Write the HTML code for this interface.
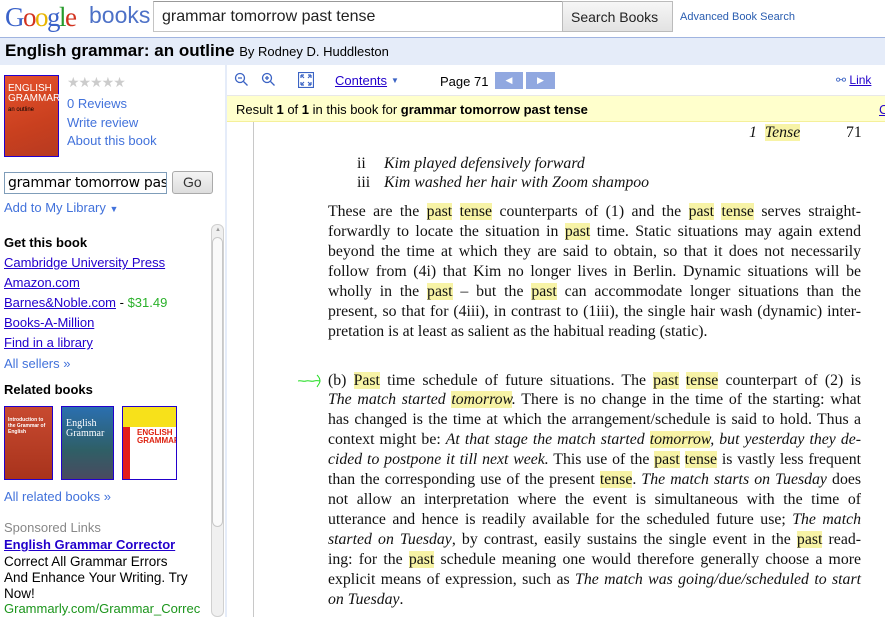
<!DOCTYPE html>
<html><head><meta charset="utf-8"><style>
*{margin:0;padding:0;box-sizing:border-box}
body{width:885px;height:617px;overflow:hidden;background:#fff;font-family:"Liberation Sans",Arial,sans-serif;font-size:13px;color:#000;position:relative}
.a{position:absolute;white-space:nowrap}
a,.lk{color:#2200cc;text-decoration:underline}
.bl{color:#4272db}
.ser{font-family:"Liberation Serif","Times New Roman",serif;font-size:15.8px;color:#111}
.ln{position:absolute;left:328px;width:533px;text-align:justify;text-align-last:justify;white-space:nowrap;line-height:19px}
.h{background:#f7f3a6}
i{font-style:italic}
</style></head><body>
<div class="a" style="left:5px;top:2px;font-size:27px;letter-spacing:-1.5px;font-family:'Liberation Serif',serif;">
<span style="color:#3a62c9">G</span><span style="color:#d2321f">o</span><span style="color:#e8b500">o</span><span style="color:#3a62c9">g</span><span style="color:#279a2c">l</span><span style="color:#d2321f">e</span></div>
<div class="a" style="left:89px;top:2px;font-size:23px;color:#4d71c7">books</div>
<div class="a" style="left:153px;top:1px;width:410px;height:31px;border:1px solid #c4c4c4;border-top-color:#999;font-size:16px;padding:6px 0 0 8px;color:#222">grammar tomorrow past tense</div>
<div class="a" style="left:562px;top:1px;width:111px;height:31px;border:1px solid #bbb;background:linear-gradient(#f6f6f6,#e2e2e2);font-size:14px;padding:7px 0 0 8px;color:#222">Search Books</div>
<div class="a" style="left:680px;top:11px;font-size:11px;color:#2a5db0">Advanced Book Search</div>
<div class="a" style="left:0;top:37px;width:885px;height:28px;background:#e5ecf9;border-top:1px solid #a0b4e0"></div>
<div class="a" style="left:5px;top:41px;font-size:17px;font-weight:bold">English grammar: an outline <span style="font-size:13px;font-weight:normal">By Rodney D. Huddleston</span></div>
<div class="a" style="left:4px;top:75px;width:55px;height:82px;border:1px solid #2200cc;background:linear-gradient(160deg,#e5512c,#c9401f 60%,#b73a20);color:#fff;font-size:10px;line-height:10px;padding:8px 0 0 3px;white-space:normal">ENGLISH<br>GRAMMAR<br><span style="font-size:6px;color:#000">an outline</span></div>
<div class="a" style="left:67px;top:74px;color:#ccc;font-size:14px;letter-spacing:-1px">★★★★★</div>
<div class="a bl" style="left:67px;top:96px">0 Reviews</div>
<div class="a bl" style="left:67px;top:115px">Write review</div>
<div class="a bl" style="left:67px;top:133px">About this book</div>
<div class="a" style="left:4px;top:172px;width:163px;height:22px;border:1px solid #7f9db9;font-size:14px;padding:2px 0 0 3px;overflow:hidden;font-family:'DejaVu Sans',sans-serif;letter-spacing:-0.3px">grammar tomorrow pas</div>
<div class="a" style="left:172px;top:171px;width:41px;height:23px;border:1px solid #aaa;border-radius:3px;background:linear-gradient(#f4f4f4,#ddd);font-size:14px;padding:2px 0 0 10px;color:#333">Go</div>
<div class="a bl" style="left:4px;top:200px">Add to My Library <span style="font-size:9px">▼</span></div>
<div class="a" style="left:4px;top:235px;font-weight:bold">Get this book</div>
<div class="a lk" style="left:4px;top:255px">Cambridge University Press</div>
<div class="a lk" style="left:4px;top:275px">Amazon.com</div>
<div class="a" style="left:4px;top:295px"><span class="lk">Barnes&amp;Noble.com</span> - <span style="color:#2ab12a">$31.49</span></div>
<div class="a lk" style="left:4px;top:315px">Books-A-Million</div>
<div class="a lk" style="left:4px;top:335px">Find in a library</div>
<div class="a bl" style="left:4px;top:356px">All sellers »</div>
<div class="a" style="left:4px;top:382px;font-weight:bold">Related books</div>
<div class="a" style="left:4px;top:406px;width:49px;height:74px;border:1px solid #2200cc;background:linear-gradient(#c84a30,#a8331c);color:#fff;font-size:5px;padding:10px 3px;white-space:normal;font-weight:bold">Introduction to the Grammar of English</div>
<div class="a" style="left:61px;top:406px;width:53px;height:74px;border:1px solid #2200cc;background:linear-gradient(#2a6fb0,#2f5f66 60%,#4a4a60);color:#fff;font-size:10px;padding:12px 4px;white-space:normal;line-height:10px;font-family:'Liberation Serif',serif">English Grammar</div>
<div class="a" style="left:122px;top:406px;width:55px;height:74px;border:1px solid #2200cc;overflow:hidden;background:linear-gradient(90deg,#e31c1c 0 7px,#fff 7px);"><div style="height:20px;background:#f7e11a"></div><div style="color:#d21;font-size:8px;font-weight:bold;padding:2px 0 0 14px;line-height:8px;white-space:normal">ENGLISH GRAMMAR</div></div>
<div class="a bl" style="left:4px;top:489px">All related books »</div>
<div class="a" style="left:4px;top:520px;color:#888">Sponsored Links</div>
<div class="a lk" style="left:4px;top:537px;font-weight:bold">English Grammar Corrector</div>
<div class="a" style="left:4px;top:554px;line-height:16px;font-size:13.5px">Correct All Grammar Errors<br>And Enhance Your Writing. Try<br>Now!</div>
<div class="a" style="left:4px;top:601px;color:#1b951b">Grammarly.com/Grammar_Correc</div>
<div class="a" style="left:211px;top:224px;width:13px;height:393px;background:#f0f0f0;border:1px solid #d0d0d0;border-radius:6px"></div>
<div class="a" style="left:212px;top:237px;width:11px;height:290px;background:#fafafa;border:1px solid #c8c8c8;border-radius:6px"></div>
<div class="a" style="left:215px;top:227px;font-size:6px;color:#999">▲</div>
<div class="a" style="left:225px;top:65px;width:2px;height:552px;background:#e5ecf9"></div>
<div class="a" style="left:227px;top:95px;width:658px;height:27px;background:#ffffcc;border-top:1px solid #e8e8e8;border-bottom:1px solid #f5f09a"></div>
<svg class="a" style="left:234px;top:72px" width="60" height="18" viewBox="0 0 60 18" fill="none" stroke="#3b63c4" stroke-width="1.3"><circle cx="6" cy="6" r="4.5"/><path d="M9.5 9.5l4 4M4 6h4"/><circle cx="33" cy="6" r="4.5"/><path d="M36.5 9.5l4 4M31 6h4M33 4v4"/></svg>
<svg class="a" style="left:298px;top:72px" width="16" height="16" viewBox="0 0 16 16" fill="none" stroke="#3b63c4" stroke-width="1.2"><rect x="0.5" y="0.5" width="15" height="15"/><path d="M3 3l3 3M3 3h3M3 3v3M13 3l-3 3M13 3h-3M13 3v3M3 13l3-3M3 13h3M3 13v-3M13 13l-3-3M13 13h-3M13 13v-3"/></svg>
<div class="a lk" style="left:335px;top:73px">Contents</div><div class="a" style="left:391px;top:76px;font-size:8px;color:#3b63c4">▼</div>
<div class="a" style="left:440px;top:74px">Page 71</div>
<div class="a" style="left:495px;top:72px;width:28px;height:17px;background:#91a8e0;color:#fff;font-size:9px;text-align:center;line-height:17px">◀</div>
<div class="a" style="left:526px;top:72px;width:29px;height:17px;background:#91a8e0;color:#fff;font-size:9px;text-align:center;line-height:17px">▶</div>
<div class="a" style="left:836px;top:73px;color:#3b63c4;font-size:12px">⚯ <span class="lk">Link</span></div>
<div class="a" style="left:236px;top:102px">Result <b>1</b> of <b>1</b> in this book for <b>grammar tomorrow past tense</b></div>
<div class="a lk" style="left:879px;top:102px">C</div>
<div class="a" style="left:253px;top:122px;width:1px;height:495px;background:#c8c8c8"></div>
<div class="a ser" style="left:749px;top:124px"><i>1</i> &nbsp;<i class="h">Tense</i></div>
<div class="a ser" style="left:846px;top:124px">71</div>
<div class="a ser" style="left:357px;top:155px">ii</div><div class="a ser" style="left:384px;top:155px"><i>Kim played defensively forward</i></div>
<div class="a ser" style="left:357px;top:174px">iii</div><div class="a ser" style="left:384px;top:174px"><i>Kim washed her hair with Zoom shampoo</i></div>
<div class="ser">
<div class="ln" style="top:202px">These are the <span class="h">past</span> <span class="h">tense</span> counterparts of (1) and the <span class="h">past</span> <span class="h">tense</span> serves straight-</div>
<div class="ln" style="top:222px">forwardly to locate the situation in <span class="h">past</span> time. Static situations may again extend</div>
<div class="ln" style="top:242px">beyond the time at which they are said to obtain, so that it does not necessarily</div>
<div class="ln" style="top:262px">follow from (4i) that Kim no longer lives in Berlin. Dynamic situations will be</div>
<div class="ln" style="top:282px">wholly in the <span class="h">past</span> – but the <span class="h">past</span> can accommodate longer situations than the</div>
<div class="ln" style="top:302px">present, so that for (4iii), in contrast to (1iii), the single hair wash (dynamic) inter-</div>
<div class="ln" style="top:322px;text-align-last:left">pretation is at least as salient as the habitual reading (static).</div>
<div class="ln" style="top:371px">(b) <span class="h">Past</span> time schedule of future situations. The <span class="h">past</span> <span class="h">tense</span> counterpart of (2) is</div>
<div class="ln" style="top:390px"><i>The match started <span class="h">tomorrow</span>.</i> There is no change in the time of the starting: what</div>
<div class="ln" style="top:410px">has changed is the time at which the arrangement/schedule is said to hold. Thus a</div>
<div class="ln" style="top:430px">context might be: <i>At that stage the match started <span class="h">tomorrow</span>, but yesterday they de-</i></div>
<div class="ln" style="top:450px"><i>cided to postpone it till next week.</i> This use of the <span class="h">past</span> <span class="h">tense</span> is vastly less frequent</div>
<div class="ln" style="top:470px">than the corresponding use of the present <span class="h">tense</span>. <i>The match starts on Tuesday</i> does</div>
<div class="ln" style="top:490px">not allow an interpretation where the event is simultaneous with the time of</div>
<div class="ln" style="top:510px">utterance and hence is readily available for the scheduled future use; <i>The match</i></div>
<div class="ln" style="top:530px"><i>started on Tuesday</i>, by contrast, easily sustains the single event in the <span class="h">past</span> read-</div>
<div class="ln" style="top:550px">ing: for the <span class="h">past</span> schedule meaning one would therefore generally choose a more</div>
<div class="ln" style="top:570px">explicit means of expression, such as <i>The match was going/due/scheduled to start</i></div>
<div class="ln" style="top:590px;text-align-last:left"><i>on Tuesday</i>.</div>
</div>
<svg class="a" style="left:298px;top:372px" width="26" height="16" viewBox="0 0 26 16" fill="none" stroke="#22dd22" stroke-width="1"><path d="M0 9c3-1 5 1 8 0s5 1 8 0 4 0 6 0M19 3c2 2 3 4 3 6s-2 4-3 6"/></svg>
</body></html>
